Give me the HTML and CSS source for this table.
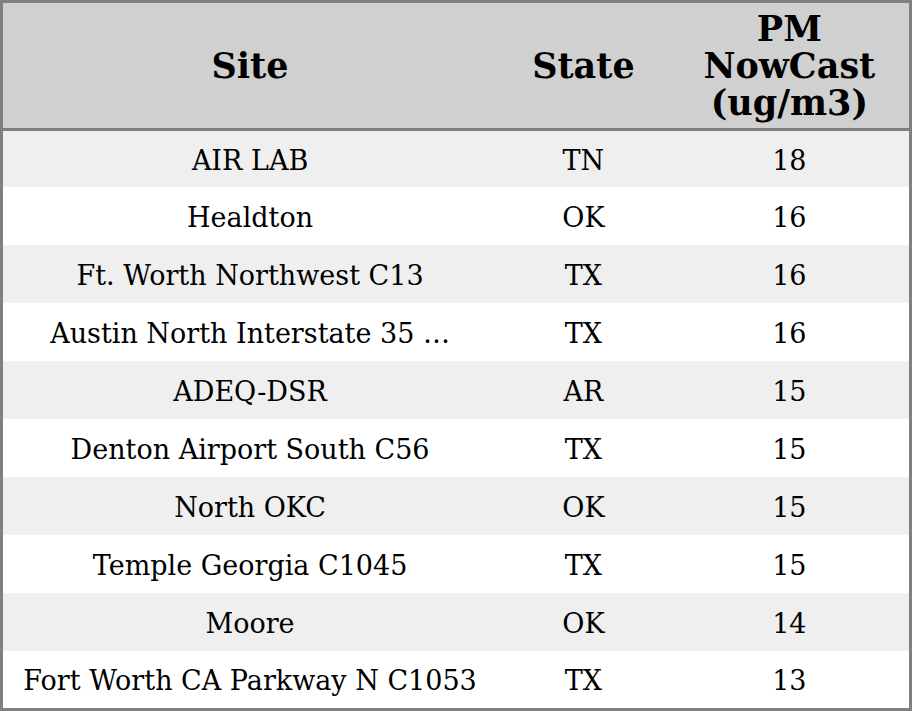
FILE: index.html
```html
<!DOCTYPE html>
<html>
<head>
<meta charset="utf-8">
<link rel="stylesheet" href="styles.css">
</head>
<body>
<table class="grid">
  <colgroup>
    <col class="c-site">
    <col class="c-state">
    <col class="c-pm">
  </colgroup>
  <thead>
    <tr><th>Site</th><th>State</th><th>PM<br>NowCast<br>(ug/m3)</th></tr>
  </thead>
  <tbody>
    <tr><td>AIR LAB</td><td>TN</td><td>18</td></tr>
    <tr><td>Healdton</td><td>OK</td><td>16</td></tr>
    <tr><td>Ft. Worth Northwest C13</td><td>TX</td><td>16</td></tr>
    <tr><td>Austin North Interstate 35 …</td><td>TX</td><td>16</td></tr>
    <tr><td>ADEQ-DSR</td><td>AR</td><td>15</td></tr>
    <tr><td>Denton Airport South C56</td><td>TX</td><td>15</td></tr>
    <tr><td>North OKC</td><td>OK</td><td>15</td></tr>
    <tr><td>Temple Georgia C1045</td><td>TX</td><td>15</td></tr>
    <tr><td>Moore</td><td>OK</td><td>14</td></tr>
    <tr><td>Fort Worth CA Parkway N C1053</td><td>TX</td><td>13</td></tr>
  </tbody>
</table>
</body>
</html>
```
FILE: styles.css
```css
html, body { margin: 0; padding: 0; background: #fff; }
.grid {
  width: 912px;
  height: 711px;
  border-collapse: collapse;
  table-layout: fixed;
  border: 3px solid #808080;
  font-family: "DejaVu Serif", serif;
  color: #000;
}
.c-site { width: 494px; }
.c-state { width: 172px; }
.c-pm { width: 240px; }
.grid th {
  background: #d0d0d0;
  font-size: 35px;
  font-weight: bold;
  line-height: 37px;
  height: 125px;
  padding: 0;
  text-align: center;
  border-bottom: 3px solid #808080;
}
.grid td {
  font-size: 27px;
  height: 56px;
  padding: 2px 0 0;
  text-align: center;
  white-space: nowrap;
}
.grid tbody tr:nth-child(odd) td { background: #efefef; }
.grid tbody tr:first-child td { height: 54px; }
.grid tbody tr:last-child td { height: 55px; }
```
